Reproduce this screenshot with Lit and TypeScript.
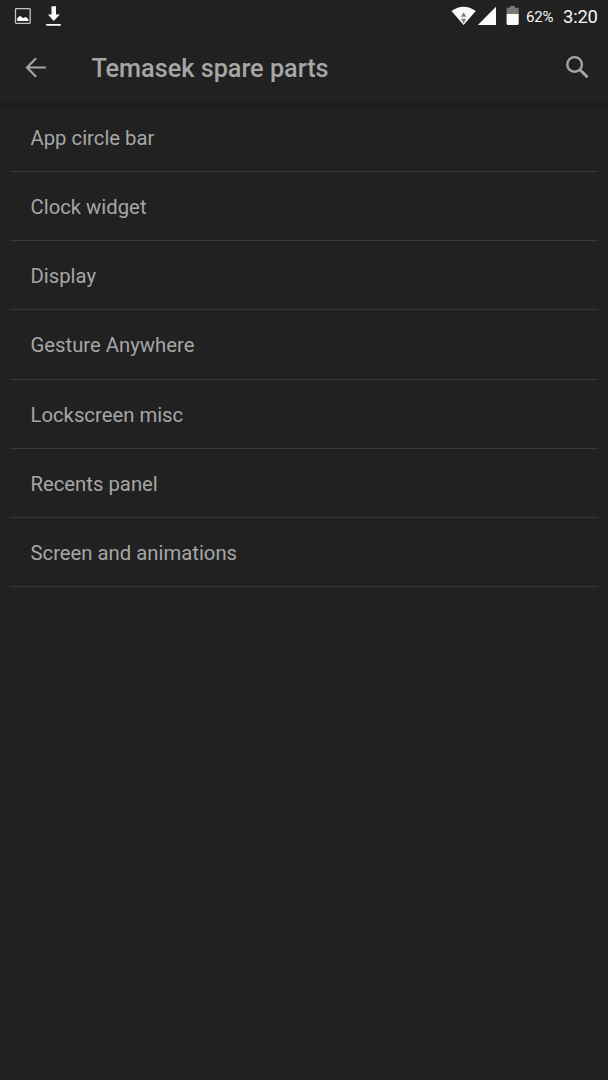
import { LitElement, html, css } from "lit";
import { customElement, property } from "lit/decorators.js";

@customElement("status-bar")
class StatusBar extends LitElement {
  static styles = css`
    :host {
      display: flex;
      align-items: flex-start;
      height: 34px;
      color: #f5f5f5;
    }
    svg { display: block; flex: none; }
    .left, .right { display: flex; height: 34px; }
    .left { padding-left: 14px; gap: 14px; }
    .right { margin-left: auto; padding-right: 10px; }
    .battery, .clock { line-height: 34px; white-space: nowrap; }
    .battery { font-size: 15px; width: 28px; margin-left: 6px; letter-spacing: -0.2px; }
    .clock { font-size: 18.4px; width: 35px; margin-left: 9px; letter-spacing: -0.2px; }
  `;
  render() {
    return html`
      <div class="left">
        <svg width="18" height="34" viewBox="0 0 18 34">
          <rect x="1.5" y="8.6" width="14.7" height="14.7" rx="0.8" fill="none" stroke="#c4c4c4" stroke-width="1.3" />
          <path d="M3.2 21V18.3L6 15.8L9 18L12 16.9L14.4 19.2V21Z" fill="#fff" />
        </svg>
        <svg width="16" height="34" viewBox="0 0 16 34">
          <path d="M5.5 6.3H10V14.4H13.8L7.8 21L1.9 14.4H5.5Z M0.2 24H14.8V25.8H0.2Z" fill="#fafafa" />
        </svg>
      </div>
      <div class="right">
        <svg width="55" height="34" viewBox="0 0 55 34">
          <path d="M0.5 10.9Q12.5 2.4 24.8 10.9L12.6 25Z" fill="#fafafa" />
          <path d="M12.6 12.2L15.3 16.8H9.9Z M9.9 18.8H15.3L12.6 23.4Z" fill="#808080" />
          <path d="M45 6.7V24.9H26.8Z" fill="#fafafa" />
        </svg>
        <svg width="14" height="34" viewBox="0 0 14 34">
          <path d="M0.6 14V7.8H3.9V6.1H8.9V7.8H12.7V14Z" fill="#777" />
          <path d="M0.6 14H12.7V23.8Q12.7 24.9 11.6 24.9H1.7Q0.6 24.9 0.6 23.8Z" fill="#fafafa" />
        </svg>
        <span class="battery">62%</span>
        <span class="clock">3:20</span>
      </div>
    `;
  }
}

@customElement("action-bar")
class ActionBar extends LitElement {
  @property() heading = "";
  static styles = css`
    :host {
      display: flex;
      align-items: center;
      height: 68px;
      color: #a6a6a6;
    }
    svg { display: block; flex: none; }
    .back { margin-left: 23px; }
    .search { margin: 0 18px 0 auto; }
    .title {
      margin: 0 0 0 42.4px;
      padding-top: 2px;
      font-size: 25.3px;
      font-weight: 500;
      line-height: 66px;
      letter-spacing: -0.03px;
      white-space: nowrap;
    }
  `;
  render() {
    return html`
      <svg class="back" width="26" height="68" viewBox="0 0 26 68">
        <path d="M22.8 33.5H4.3M13.1 24.3L4 33.5L13.1 42.7" fill="none" stroke="#a6a6a6" stroke-width="2.2" />
      </svg>
      <h1 class="title">${this.heading}</h1>
      <svg class="search" width="26" height="68" viewBox="0 0 26 68">
        <circle cx="10.6" cy="30.4" r="7.3" fill="none" stroke="#a6a6a6" stroke-width="2.4" />
        <path d="M15.7 35.5L23.5 43.2" stroke="#a6a6a6" stroke-width="3" />
      </svg>
    `;
  }
}

@customElement("app-root")
class AppRoot extends LitElement {
  private items = [
    "App circle bar",
    "Clock widget",
    "Display",
    "Gesture Anywhere",
    "Lockscreen misc",
    "Recents panel",
    "Screen and animations",
  ];
  static styles = css`
    :host {
      display: block;
      height: 1080px;
      overflow: hidden;
      background: #212121;
      font-family: Roboto, sans-serif;
    }
    .shade {
      height: 11px;
      margin-bottom: -11px;
      background: linear-gradient(#1c1c1c, #1e1e1e 50%, #212121);
    }
    .list { margin: 0; padding: 1px 10px 0; list-style: none; }
    .row {
      box-sizing: border-box;
      height: 69.17px;
      padding: 0 20.5px;
      border-bottom: 1px solid #383838;
      color: #a6a6a6;
      font-size: 20.3px;
      line-height: 70px;
      white-space: nowrap;
    }
  `;
  render() {
    return html`
      <status-bar></status-bar>
      <action-bar heading="Temasek spare parts"></action-bar>
      <div class="shade"></div>
      <ul class="list">
        ${this.items.map((item) => html`<li class="row">${item}</li>`)}
      </ul>
    `;
  }
}
